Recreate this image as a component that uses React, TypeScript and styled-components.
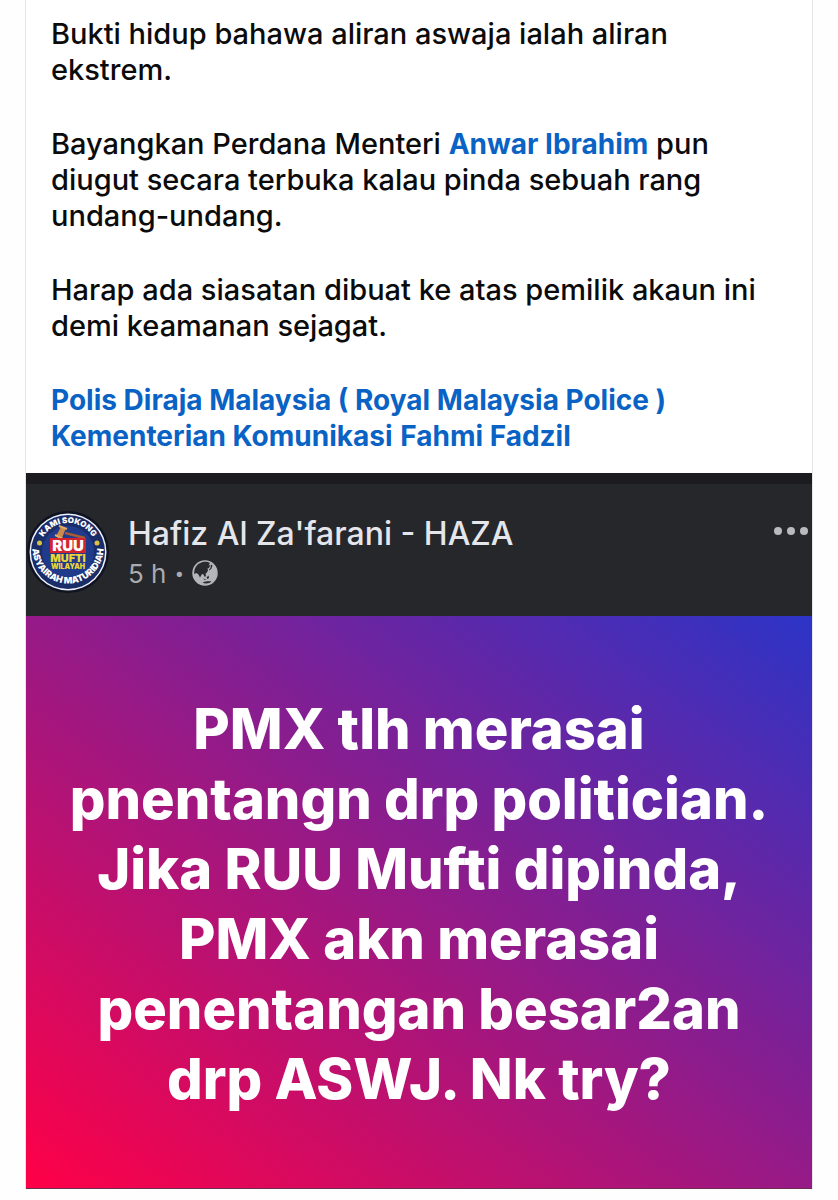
import React from "react";
import styled, { createGlobalStyle } from "styled-components";

const GlobalStyle = createGlobalStyle`
  * { box-sizing: border-box; }
  body {
    margin: 0;
    background: #fefefe;
    font-family: Inter, "Liberation Sans", sans-serif;
  }
`;

const Page = styled.main`
  padding: 0 25px 11px;
`;

const Post = styled.article`
  border: solid #e6e6e8;
  border-width: 0 1px;
  background: #fff;
`;

const Message = styled.div`
  display: flex;
  flex-direction: column;
  gap: 38px;
  padding: 16px 25px 19px;
`;

const Paragraph = styled.p`
  margin: 0;
  color: #0b0b0c;
  font-size: 29px;
  font-weight: 500;
  line-height: 36px;
`;

const Mention = styled.a`
  color: #0a63c4;
  font-size: 28px;
  font-weight: 700;
  text-decoration: none;
`;

const SharedPost = styled.section`
  border-top: 11px solid #1c1c20;
  border-bottom: 1px solid #6d3050;
  background: #26272b;
`;

const SharedHeader = styled.header`
  display: flex;
  align-items: flex-start;
  padding: 27px 4px 22px 1px;
`;

const Avatar = styled.svg`
  flex: none;
  width: 82px;
  height: 82px;
  margin-right: 19px;
`;

const Identity = styled.div`
  flex: 1;
`;

const Author = styled.h2`
  margin: 5px 0 0;
  color: #e4e6eb;
  font-size: 32px;
  font-weight: 500;
  line-height: 36px;
`;

const Meta = styled.div`
  display: flex;
  align-items: center;
  gap: 8px;
  height: 42px;
  color: #a9abaf;
  font-size: 26px;
`;

const Separator = styled.span`
  font-weight: 900;
`;

const MoreButton = styled.button`
  display: flex;
  margin-top: 15px;
  padding: 0;
  border: 0;
  background: none;
`;

const Banner = styled.div`
  padding: 78px 24px 74px;
  background: linear-gradient(to top right, #ff0047 0%, #2c34c7 100%);
`;

const BannerText = styled.p`
  margin: 0;
  color: #fff;
  font-size: 56px;
  font-weight: 800;
  line-height: 70px;
  text-align: center;
`;

const Badge = () => (
  <Avatar viewBox="0 0 82 82" role="img" aria-label="Kami Sokong RUU Mufti Wilayah">
    <defs>
      <path id="arcTop" d="M12 41 A29 29 0 0 1 70 41" />
      <path id="arcBottom" d="M5.500 37 A35.500 35.500 0 1 0 76.500 37" />
    </defs>
    <circle cx="41" cy="41" r="41" fill="#101322" />
    <circle cx="41" cy="41" r="38.500" fill="#eef1fa" />
    <circle cx="41" cy="41" r="37" fill="#1b2d68" />
    <circle cx="41" cy="41" r="26" fill="#203a8c" />
    <g fill="#fff" fontFamily="Inter, sans-serif" fontWeight="900">
      <text textAnchor="middle" fontSize="8">
        <textPath href="#arcTop" startOffset="50%">KAMI SOKONG</textPath>
      </text>
      <text textAnchor="middle" fontSize="9">
        <textPath href="#arcBottom" startOffset="50%">ASYAIRAH MATURIDIAH</textPath>
      </text>
    </g>
    <circle cx="12.500" cy="32" r="2.500" fill="#d8c243" />
    <circle cx="70" cy="32" r="2.500" fill="#d8c243" />
    <path d="M38 22 L58 27" stroke="#a95b35" strokeWidth="2.500" />
    <path d="M34 16 L39 17 L35 27 L29 25 Z" fill="#c98a4a" />
    <path d="M32 15 L40 18 M28 24 L36 28" stroke="#e0aa66" strokeWidth="2" />
    <rect x="23" y="27" width="36" height="15" fill="#d4222f" />
    <g textAnchor="middle" fontFamily="Inter, sans-serif" fontWeight="900">
      <text x="41" y="40" fill="#fff" fontSize="15">RUU</text>
      <text x="41" y="51" fill="#e9d735" fontSize="11">MUFTI</text>
      <text x="41" y="58" fill="#e9d735" fontSize="7">WILAYAH</text>
    </g>
  </Avatar>
);

const Globe = () => (
  <svg width="26" height="26" viewBox="0 0 26 26" role="img" aria-label="Public">
    <circle cx="13" cy="13" r="12" fill="#b4b6ba" stroke="#b4b6ba" strokeWidth="1.500" />
    <path
      fill="#292a2e"
      d="M2.300 14 C1.800 8 5 3.500 10 2.200 C13 1.500 16 1.800 18 3 L16.500 5.500 L18.500 5 L17 8 L15.500 8.500 L16 10.500 L14.500 13 L13.500 13.500 L14 16 L12.800 17 L11.500 14.500 L10 14 L8 17.500 L6.500 14.500 L4.500 13 Z"
    />
    <path fill="#292a2e" d="M19 4.500 L20.500 5.500 L19.500 8.500 L17.500 10.500 L17 9.500 L18.500 8 Z M14.500 17.500 L16.500 15.500 L17 18 L15.500 19 Z M11 18.500 L14 19.500 L13 20.300 Z" />
    <path fill="#292a2e" d="M10.500 22.500 C13 21.500 17 21 19.500 21.500 C17.500 23.500 13 24.200 10.500 22.500 Z" />
  </svg>
);

export default function App() {
  return (
    <>
      <GlobalStyle />
      <Page>
        <Post>
          <Message>
            <Paragraph>
              Bukti hidup bahawa aliran aswaja ialah aliran
              <br />
              ekstrem.
            </Paragraph>
            <Paragraph>
              Bayangkan Perdana Menteri <Mention href="#anwar">Anwar Ibrahim</Mention> pun
              <br />
              diugut secara terbuka kalau pinda sebuah rang
              <br />
              undang-undang.
            </Paragraph>
            <Paragraph>
              Harap ada siasatan dibuat ke atas pemilik akaun ini
              <br />
              demi keamanan sejagat.
            </Paragraph>
            <Paragraph>
              <Mention href="#pdrm">Polis Diraja Malaysia ( Royal Malaysia Police )</Mention>
              <br />
              <Mention href="#komunikasi">Kementerian Komunikasi</Mention>{" "}
              <Mention href="#fahmi">Fahmi Fadzil</Mention>
            </Paragraph>
          </Message>
          <SharedPost>
            <SharedHeader>
              <Badge />
              <Identity>
                <Author>Hafiz Al Za'farani - HAZA</Author>
                <Meta>
                  <span>5 h</span>
                  <Separator>·</Separator>
                  <Globe />
                </Meta>
              </Identity>
              <MoreButton type="button" aria-label="More options">
                <svg width="34" height="10" viewBox="0 0 34 10" fill="#b9babd">
                  <circle cx="4" cy="5" r="4" />
                  <circle cx="17" cy="5" r="4" />
                  <circle cx="30" cy="5" r="4" />
                </svg>
              </MoreButton>
            </SharedHeader>
            <Banner>
              <BannerText>
                PMX tlh merasai
                <br />
                pnentangn drp politician.
                <br />
                Jika RUU Mufti dipinda,
                <br />
                PMX akn merasai
                <br />
                penentangan besar2an
                <br />
                drp ASWJ. Nk try?
              </BannerText>
            </Banner>
          </SharedPost>
        </Post>
      </Page>
    </>
  );
}
